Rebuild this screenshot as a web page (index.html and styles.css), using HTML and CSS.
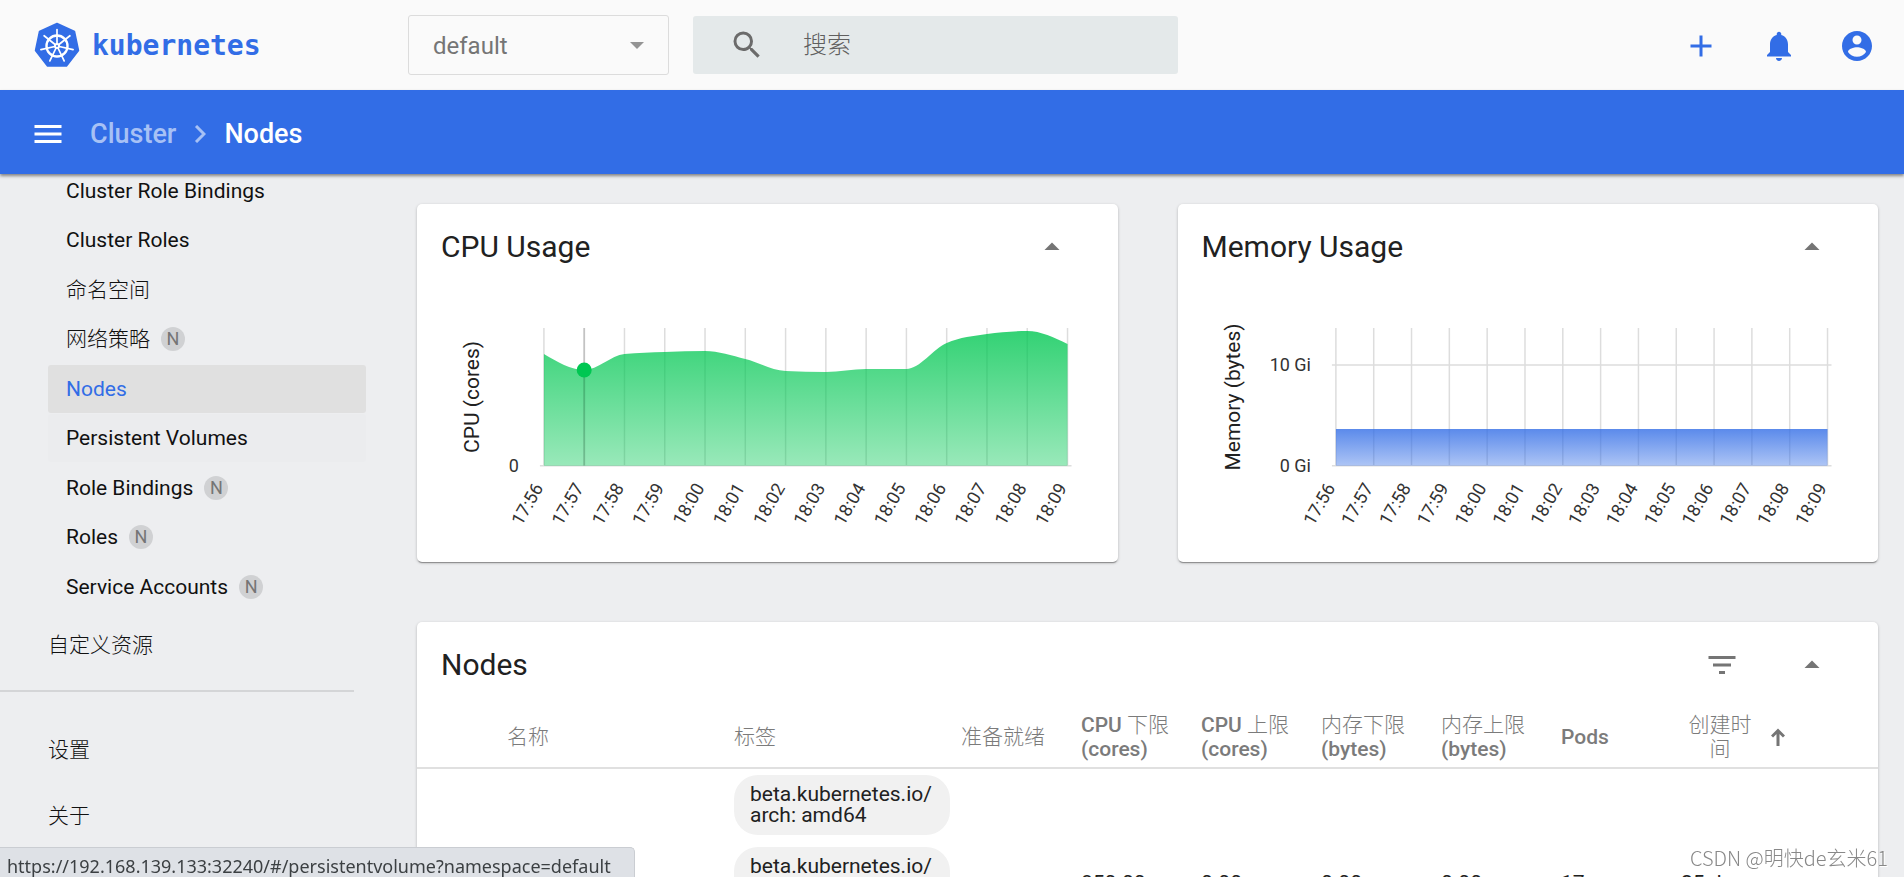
FILE: index.html
```html
<!DOCTYPE html>
<html lang="zh-CN">
<head>
<meta charset="utf-8">
<title>Kubernetes Dashboard</title>
<link rel="stylesheet" href="styles.css">
</head>
<body>
<header class="topbar">
  <a class="brand" href="#">
    <svg class="brand-logo" viewBox="0 0 46 46" aria-hidden="true">
      <path d="M23 1.500 40.500 9.500 44.500 28.500 32.500 44H13.500L1.500 28.500 5.500 9.500Z" fill="#326de6" stroke="#326de6" stroke-width="1.500" stroke-linejoin="round"/>
      <circle cx="23" cy="24" r="10.500" fill="none" stroke="#fff" stroke-width="2.400"/>
      <g stroke="#fff" stroke-width="1.700" stroke-linecap="round">
        <path d="M23 24V7.500"/>
        <path d="M23 24V7.500" transform="rotate(51.430 23 24)"/>
        <path d="M23 24V7.500" transform="rotate(102.860 23 24)"/>
        <path d="M23 24V7.500" transform="rotate(154.290 23 24)"/>
        <path d="M23 24V7.500" transform="rotate(205.710 23 24)"/>
        <path d="M23 24V7.500" transform="rotate(257.140 23 24)"/>
        <path d="M23 24V7.500" transform="rotate(308.570 23 24)"/>
      </g>
      <circle cx="23" cy="24" r="3" fill="#fff"/>
      <circle cx="23" cy="24" r="1" fill="#326de6"/>
    </svg>
    <span class="brand-name">kubernetes</span>
  </a>
  <div class="namespace">
    <select class="namespace-select" aria-label="Namespace"><option>default</option></select>
    <svg class="namespace-caret" viewBox="0 0 14 7" aria-hidden="true"><path d="M0 0h14L7 7z"/></svg>
  </div>
  <label class="search">
    <svg class="icon" viewBox="0 0 24 24" aria-hidden="true"><path d="M15.500 14h-.79l-.28-.27A6.471 6.471 0 0 0 16 9.500 6.500 6.500 0 1 0 9.500 16c1.610 0 3.090-.59 4.230-1.570l.27.28v.79l5 4.990L20.490 19l-4.990-5zm-6 0C7.010 14 5 11.990 5 9.500S7.010 5 9.500 5 14 7.010 14 9.500 11.990 14 9.500 14z"/></svg>
    <input class="search-input" type="text" placeholder="搜索" aria-label="搜索">
  </label>
  <div class="actions">
    <button class="icon-button" type="button" aria-label="创建"><svg class="icon" viewBox="0 0 24 24"><path d="M19 13h-6v6h-2v-6H5v-2h6V5h2v6h6v2z"/></svg></button>
    <button class="icon-button" type="button" aria-label="通知"><svg class="icon" viewBox="0 0 24 24"><path d="M12 22c1.100 0 2-.9 2-2h-4c0 1.100.89 2 2 2zm6-6v-5c0-3.070-1.640-5.640-4.500-6.320V4c0-.83-.67-1.500-1.500-1.500s-1.500.67-1.500 1.500v.68C7.630 5.360 6 7.920 6 11v5l-2 2v1h16v-1l-2-2z"/></svg></button>
    <button class="icon-button" type="button" aria-label="账户"><svg class="icon" viewBox="0 0 24 24"><path d="M12 2C6.480 2 2 6.480 2 12s4.480 10 10 10 10-4.480 10-10S17.520 2 12 2zm0 3c1.660 0 3 1.340 3 3s-1.340 3-3 3-3-1.340-3-3 1.340-3 3-3zm0 14.200c-2.500 0-4.710-1.280-6-3.220.03-1.990 4-3.080 6-3.080 1.990 0 5.970 1.090 6 3.080-1.290 1.940-3.500 3.220-6 3.220z"/></svg></button>
  </div>
</header>

<div class="crumbbar">
  <button class="menu-button" type="button" aria-label="菜单"><svg class="icon" viewBox="0 0 24 24"><path d="M3 18h18v-2H3v2zm0-5h18v-2H3v2zm0-7v2h18V6H3z"/></svg></button>
  <a class="crumb" href="#">Cluster</a>
  <svg class="crumb-arrow" viewBox="0 0 12 18" aria-hidden="true"><path d="M2 1 10 9 2 17"/></svg>
  <h1 class="crumb-current">Nodes</h1>
</div>

<div class="layout">
  <nav class="sidebar">
    <ul class="nav-list">
      <li><a class="nav-item" href="#">Cluster Role Bindings</a></li>
      <li><a class="nav-item" href="#">Cluster Roles</a></li>
      <li><a class="nav-item cjk" href="#">命名空间</a></li>
      <li><a class="nav-item" href="#"><span class="cjk">网络策略</span><span class="badge">N</span></a></li>
      <li><a class="nav-item nav-item-active" href="#">Nodes</a></li>
      <li><a class="nav-item nav-item-hover" href="#">Persistent Volumes</a></li>
      <li><a class="nav-item" href="#">Role Bindings<span class="badge">N</span></a></li>
      <li><a class="nav-item" href="#">Roles<span class="badge">N</span></a></li>
      <li><a class="nav-item" href="#">Service Accounts<span class="badge">N</span></a></li>
    </ul>
    <a class="nav-group cjk" href="#">自定义资源</a>
    <hr class="nav-divider">
    <a class="nav-group cjk" href="#">设置</a>
    <a class="nav-group cjk" href="#">关于</a>
  </nav>

  <main class="content">
    <div class="charts">
      <section class="card">
        <div class="card-head">
          <h2 class="card-title">CPU Usage</h2>
          <button class="card-button" type="button" aria-label="收起"><svg class="icon" viewBox="0 0 24 24"><path d="M7 14l5-5 5 5z"/></svg></button>
        </div>
        <svg class="chart" id="cpu-chart" viewBox="0 0 701 272" role="img" aria-label="CPU Usage"></svg>
      </section>
      <section class="card">
        <div class="card-head">
          <h2 class="card-title">Memory Usage</h2>
          <button class="card-button" type="button" aria-label="收起"><svg class="icon" viewBox="0 0 24 24"><path d="M7 14l5-5 5 5z"/></svg></button>
        </div>
        <svg class="chart" id="memory-chart" viewBox="0 0 701 272" role="img" aria-label="Memory Usage"></svg>
      </section>
    </div>

    <section class="card">
      <div class="card-head">
        <h2 class="card-title">Nodes</h2>
        <button class="card-button" type="button" aria-label="筛选"><svg class="icon" viewBox="0 0 24 24"><path d="M10 18h4v-2h-4v2zM3 6v2h18V6H3zm3 7h12v-2H6v2z"/></svg></button>
        <button class="card-button" type="button" aria-label="收起"><svg class="icon" viewBox="0 0 24 24"><path d="M7 14l5-5 5 5z"/></svg></button>
      </div>
      <table class="nodes">
        <colgroup>
          <col class="col-status"><col class="col-wide"><col class="col-wide">
          <col class="col-stat"><col class="col-stat"><col class="col-stat"><col class="col-stat"><col class="col-stat"><col class="col-stat"><col class="col-stat">
          <col>
        </colgroup>
        <thead>
          <tr>
            <td></td>
            <th scope="col"><span class="cjk">名称</span></th>
            <th scope="col"><span class="cjk">标签</span></th>
            <th scope="col"><span class="cjk">准备就绪</span></th>
            <th scope="col">CPU <span class="cjk">下限</span><br>(cores)</th>
            <th scope="col">CPU <span class="cjk">上限</span><br>(cores)</th>
            <th scope="col"><span class="cjk">内存下限</span><br>(bytes)</th>
            <th scope="col"><span class="cjk">内存上限</span><br>(bytes)</th>
            <th scope="col">Pods</th>
            <th scope="col" aria-sort="ascending">
              <button class="sort" type="button"><span class="sort-label cjk">创建时间</span><svg class="sort-arrow" viewBox="0 0 14 18" aria-hidden="true"><path d="M7 18V3M1 8.500 7 2.500 13 8.500"/></svg></button>
            </th>
            <td></td>
          </tr>
        </thead>
        <tbody>
          <tr>
            <td></td>
            <td></td>
            <td class="labels"><span class="chip">beta.kubernetes.io/<wbr>arch: amd64</span><span class="chip">beta.kubernetes.io/<wbr>os: linux</span></td>
            <td></td>
            <td>850.00m</td>
            <td>0.00</td>
            <td>0.00</td>
            <td>0.00</td>
            <td>17</td>
            <td>25 days</td>
            <td></td>
          </tr>
        </tbody>
      </table>
    </section>
  </main>
</div>

<div class="link-status">https://192.168.139.133:32240/#/persistentvolume?namespace=default</div>
<div class="watermark">CSDN @明快de玄米61</div>
<script src="charts.js"></script>
</body>
</html>
```

FILE: styles.css
```css
* { box-sizing: border-box; }

body {
  margin: 0;
  height: 100vh;
  overflow: hidden;
  display: flex;
  flex-direction: column;
  background: #edeef0;
  color: #212121;
  font: 21px/24px Roboto, "Noto Sans CJK SC", sans-serif;
}

a { color: inherit; text-decoration: none; }
button { padding: 0; border: 0; background: none; color: inherit; font: inherit; }
h1, h2, ul { margin: 0; padding: 0; }

.icon { display: block; width: 36px; height: 36px; fill: currentColor; }
.cjk { font-weight: 300; }

.topbar {
  flex: none;
  display: flex;
  align-items: center;
  height: 90px;
  padding: 0 17px 0 34px;
  background: #fafafa;
}

.brand { display: flex; align-items: center; gap: 12px; width: 374px; color: #326de6; }
.brand-logo { width: 46px; height: 46px; }
.brand-name { padding-top: 2px; font: bold 28px/36px "DejaVu Sans Mono", monospace; }

.namespace { position: relative; width: 261px; margin-right: 24px; }
.namespace-select {
  appearance: none;
  display: block;
  width: 100%;
  height: 60px;
  padding: 2px 24px 0;
  border: 1px solid #dcdcdc;
  border-radius: 3px;
  background: #fafafa;
  color: #757575;
  font: 24px Roboto, sans-serif;
}
.namespace-caret { position: absolute; right: 25px; top: 27px; width: 14px; height: 7px; fill: #949494; pointer-events: none; }

.search {
  display: flex;
  align-items: center;
  gap: 38px;
  width: 485px;
  height: 58px;
  padding: 0 36px;
  border-radius: 3px;
  background: #e4e9ea;
  color: #6b6b6b;
}
.search-input {
  flex: 1;
  min-width: 0;
  padding: 0;
  border: 0;
  outline: 0;
  background: none;
  font: 24px Roboto, "Noto Sans CJK SC", sans-serif;
}
.search-input::placeholder { color: #5f5f5f; font-weight: 300; }

.actions { display: flex; gap: 18px; margin-left: auto; padding-top: 2px; }
.icon-button { display: grid; place-items: center; width: 60px; height: 60px; color: #326de6; }

.crumbbar {
  flex: none;
  position: relative;
  z-index: 1;
  display: flex;
  align-items: center;
  height: 84px;
  padding: 3px 30px 0;
  background: #326de6;
  color: #fff;
  font-size: 27px;
  line-height: 36px;
  font-weight: 500;
  box-shadow: 0 2px 3px rgba(0, 0, 0, .45);
}
.menu-button { margin-right: 24px; }
.crumb { color: #a7c1f5; }
.crumb-arrow { width: 12px; height: 18px; margin: 0 18px; fill: none; stroke: #a7c1f5; stroke-width: 3; }
.crumb-current { font: inherit; }

.layout { flex: 1; min-height: 0; display: flex; }

.sidebar { flex: none; width: 366px; overflow: hidden; color: #111; }
.nav-list { margin: -7px 0 0 48px; list-style: none; }
.nav-list li { padding-bottom: 1px; }
.nav-list li:nth-child(even) { padding-bottom: 2px; }
.nav-item { display: flex; align-items: center; gap: 11px; height: 48px; padding: 0 18px; border-radius: 3px; }
.nav-item-active { background: #e0e0e0; color: #326de6; }
.nav-item-hover { background: #ebecee; }
.badge {
  width: 24px;
  height: 24px;
  border-radius: 50%;
  background: #d0d1d3;
  color: #757575;
  font-size: 18px;
  text-align: center;
}
.nav-group { display: flex; align-items: center; height: 66px; padding-left: 48px; }
.nav-divider { width: 354px; height: 2px; margin: 12px 0 25px; border: 0; background: #d4d5d7; }

.content { flex: 1; min-width: 0; padding: 30px 26px 0 51px; }
.charts { display: grid; grid-template-columns: 1fr 1fr; gap: 60px; margin-bottom: 60px; }
.card { border-radius: 5px; background: #fff; box-shadow: 0 1px 3px rgba(0, 0, 0, .25), 0 2px 1px -1px rgba(0, 0, 0, .3); }
.card-head { display: flex; align-items: center; gap: 18px; height: 86px; padding: 0 30px 0 24px; }
.card-title { flex: 1; font-size: 30px; line-height: 36px; font-weight: 400; }
.card-button { display: grid; place-items: center; width: 72px; height: 72px; color: #757575; }

.chart { display: block; width: 100%; font-size: 18px; fill: #333; }
.grid-line { stroke: #ddd; stroke-width: 1.5px; }
.chart-x, .chart-y { text-anchor: end; }
.chart-name { font-size: 21px; text-anchor: middle; fill: #212121; }

.nodes { width: 100%; table-layout: fixed; border-collapse: collapse; }
.nodes th, .nodes td { padding: 0; text-align: left; }
.nodes thead { color: #7b7b7b; }
.nodes thead tr { height: 60px; border-bottom: 2px solid #e0e0e0; }
.nodes th { font-weight: 500; }
.nodes tbody td { padding-top: 102px; vertical-align: top; }
.nodes tbody .labels { padding-top: 6px; }
.col-status { width: 90px; }
.col-wide { width: 227px; }
.col-stat { width: 120px; }
.chip {
  display: block;
  width: 216px;
  margin-bottom: 12px;
  padding: 9px 16px;
  border-radius: 24px;
  background: #f1f1f1;
  line-height: 21px;
}
.sort { display: flex; align-items: center; gap: 12px; }
.sort-label { width: 78px; text-align: center; }
.sort-arrow { width: 14px; height: 18px; fill: none; stroke: #757575; stroke-width: 3; }

.link-status {
  position: fixed;
  left: 0;
  bottom: 0;
  z-index: 2;
  height: 30px;
  padding: 0 23px 0 7px;
  border: solid #cacdd2;
  border-width: 1px 1px 0 0;
  border-radius: 0 5px 0 0;
  background: #dee1e6;
  color: #3c4043;
  font: 18px/36px "Noto Sans", sans-serif;
}
.watermark {
  position: fixed;
  right: 16px;
  bottom: 5px;
  z-index: 2;
  color: #888;
  font: 300 20px/28px "Noto Sans CJK SC", sans-serif;
  text-shadow: 1px 1px 0 #fff;
}
```

FILE: charts.js
```js
const TIMES = ['17:56', '17:57', '17:58', '17:59', '18:00', '18:01', '18:02',
  '18:03', '18:04', '18:05', '18:06', '18:07', '18:08', '18:09'];
const TOP = 38;
const BASE = 176;

function monotonePath(xs, ys) {
  const step = xs[1] - xs[0];
  const d = ys.slice(1).map((y, i) => y - ys[i]);
  const t = ys.map((_, i) => {
    if (i === 0 || i === ys.length - 1) return 0;
    const a = d[i - 1], b = d[i];
    return (Math.sign(a) + Math.sign(b)) * Math.min(Math.abs(a), Math.abs(b), Math.abs(a + b) / 4);
  });
  t[0] = (3 * d[0] - t[1]) / 2;
  t[t.length - 1] = (3 * d[d.length - 1] - t[t.length - 2]) / 2;
  let path = `M${xs[0]} ${ys[0]}`;
  for (let i = 1; i < xs.length; i++) {
    path += `C${xs[i - 1] + step / 3} ${ys[i - 1] + t[i - 1] / 3} ${xs[i] - step / 3} ${ys[i] - t[i] / 3} ${xs[i]} ${ys[i]}`;
  }
  return path;
}

function drawChart({ id, name, nameY, left, right, ticks, values, color, opacity, marker }) {
  const xs = TIMES.map((_, i) => left + i * (right - left) / (TIMES.length - 1));
  let out = `<defs><linearGradient id="${id}-fill" gradientUnits="userSpaceOnUse" x1="0" x2="0" y1="${Math.min(...values)}" y2="${BASE}">
    <stop offset="0" stop-color="${color}" stop-opacity="${opacity}"/><stop offset="1" stop-color="${color}" stop-opacity=".4"/></linearGradient></defs>`;
  xs.forEach((x, i) => {
    out += `<line class="grid-line" x1="${x}" x2="${x}" y1="${TOP}" y2="${BASE}"/>`;
    out += `<text class="chart-x" transform="translate(${x} 198) rotate(-60)">${TIMES[i]}</text>`;
  });
  ticks.forEach(([label, y]) => {
    out += `<line class="grid-line" x1="${left - 4}" x2="${right + 4}" y1="${y}" y2="${y}"/>`;
    out += `<text class="chart-y" x="${left - 25}" y="${y + 6}">${label}</text>`;
  });
  out += `<text class="chart-name" transform="translate(62 ${nameY}) rotate(-90)">${name}</text>`;
  out += `<path fill="url(#${id}-fill)" d="${monotonePath(xs, values)}V${BASE}H${left}Z"/>`;
  if (marker !== undefined) {
    out += `<line stroke="#000" stroke-opacity=".12" stroke-width="2" x1="${xs[marker]}" x2="${xs[marker]}" y1="${TOP}" y2="${BASE}"/>`;
    out += `<circle fill="${color}" cx="${xs[marker]}" cy="${values[marker]}" r="7.500"/>`;
  }
  document.getElementById(id).innerHTML = out;
}

drawChart({
  id: 'cpu-chart', name: 'CPU (cores)', nameY: 107, left: 127, right: 651,
  ticks: [['0', 176]],
  values: [64, 80, 64, 62, 61, 69, 81, 82, 79, 79, 53, 44, 41, 54],
  color: '#00c752', opacity: 0.8, marker: 1,
});
drawChart({
  id: 'memory-chart', name: 'Memory (bytes)', nameY: 107, left: 158, right: 650,
  ticks: [['10 Gi', 75], ['0 Gi', 176]],
  values: TIMES.map(() => 139),
  color: '#326de6', opacity: 0.8,
});
```
